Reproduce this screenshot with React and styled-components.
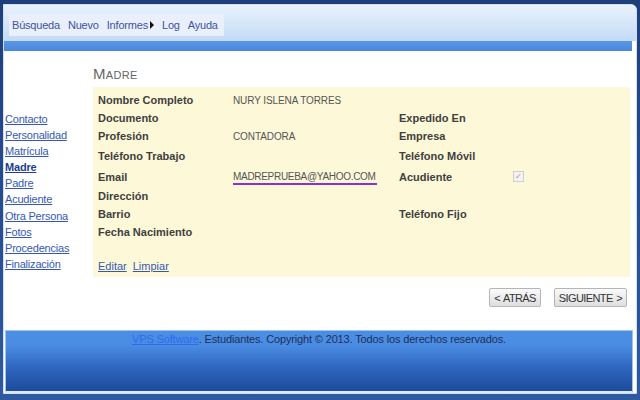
import React from "react";
import styled, { createGlobalStyle } from "styled-components";

const GlobalStyle = createGlobalStyle`
  html, body {
    margin: 0;
    padding: 0;
    background: #2b4b8a;
  }
  body {
    font-family: "Liberation Sans", Arial, sans-serif;
  }
`;

const Frame = styled.div`
  width: 640px;
  height: 400px;
  box-sizing: border-box;
  padding: 4px 3px 6px 3px;
  background: linear-gradient(#1f3f7c, #2f5aa0);
`;

const Page = styled.div`
  height: 100%;
  display: flex;
  flex-direction: column;
  background: #ffffff;
  border-radius: 0 6px 0 0;
  overflow: hidden;
  border: 1px solid #cfe0f5;
  box-sizing: border-box;
`;

const Header = styled.div`
  height: 36px;
  box-sizing: border-box;
  padding: 9px 0 0 5px;
  background: linear-gradient(#e9f2fd, #c3dbf6);
`;

const Menu = styled.nav`
  display: inline-flex;
  align-items: center;
  gap: 8px;
  height: 22px;
  padding: 0 6px 0 3px;
  background: #e9f0fb;
  font-size: 11px;
  letter-spacing: -0.2px;
  color: #3d52a4;
`;

const MenuItem = styled.span`
  display: inline-flex;
  align-items: center;
  gap: 2px;
`;

const Arrow = styled.span`
  width: 0;
  height: 0;
  border-top: 4px solid transparent;
  border-bottom: 4px solid transparent;
  border-left: 4px solid #111;
`;

const BlueBar = styled.div`
  height: 10px;
  margin-right: 4px;
  background: linear-gradient(#5b97e6, #4a86d8);
`;

const Body = styled.div`
  flex: 1;
  display: flex;
`;

const Sidebar = styled.div`
  width: 89px;
  padding: 60px 0 0 1px;
  display: flex;
  flex-direction: column;
  align-items: flex-start;
  box-sizing: border-box;
`;

const NavLink = styled.a`
  font-size: 11px;
  letter-spacing: -0.2px;
  line-height: 16.1px;
  color: ${(p) => (p.$active ? "#1d3c95" : "#3558b5")};
  font-weight: ${(p) => (p.$active ? "bold" : "normal")};
  text-decoration: underline;
`;

const Main = styled.div`
  flex: 1;
  padding: 14px 6px 0 0;
  display: flex;
  flex-direction: column;
`;

const Title = styled.h2`
  margin: 0 0 4px 0;
  height: 18px;
  font-size: 15px;
  font-weight: normal;
  font-variant: small-caps;
  color: #666666;
  letter-spacing: 0.3px;
`;

const Panel = styled.div`
  background: #fdf8d8;
  height: 190px;
  box-sizing: border-box;
  padding: 4px 0 0 5px;
  display: flex;
  flex-direction: column;
`;

const Row = styled.div`
  display: grid;
  grid-template-columns: 135px 166px 114px 1fr;
  align-items: center;
  height: ${(p) => p.$h || 18}px;
  font-size: 11px;
`;

const Label = styled.span`
  font-weight: bold;
  color: #3f3f3f;
`;

const Value = styled.span`
  color: #555555;
  font-size: 10px;
  letter-spacing: -0.1px;
`;

const EmailValue = styled(Value)`
  justify-self: start;
  border-bottom: 2px solid #8e2fd0;
  padding: 0 1px 1px 0;
  margin-top: 3px;
  letter-spacing: -0.3px;
`;

const Check = styled.span`
  width: 9px;
  height: 9px;
  border: 1px solid #cfcfcf;
  background: #f3f3f3;
  font-size: 8px;
  line-height: 9px;
  color: #9a9a9a;
  text-align: center;
`;

const Actions = styled.div`
  margin-top: 19px;
  display: flex;
  gap: 6px;
  font-size: 11px;
`;

const ActionLink = styled.a`
  color: #3558b5;
  text-decoration: underline;
`;

const ButtonRow = styled.div`
  display: flex;
  justify-content: flex-end;
  gap: 13px;
  margin-top: 11px;
  padding-right: 3px;
`;

const Button = styled.button`
  height: 19px;
  padding: 0 4px;
  font-family: "Liberation Sans", Arial, sans-serif;
  font-size: 11px;
  letter-spacing: -0.6px;
  word-spacing: 1px;
  color: #333;
  border: 1px solid #b5b5b5;
  border-radius: 2px;
  background: linear-gradient(#fafafa, #dedede);
`;

const Footer = styled.div`
  height: 63px;
  margin: 0 3px 0 1px;
  border: 1px solid #9fc3f0;
  border-bottom: 2px solid #dfeaf8;
  background: linear-gradient(#4a8fe4 0%, #4a8ce2 25%, #2f67c0 60%, #1d4b9b 100%);
  text-align: center;
  font-size: 11px;
  letter-spacing: -0.15px;
  color: #1f2f5c;
  padding-top: 2px;
  box-sizing: border-box;
`;

const FooterLink = styled.a`
  color: #2b6cf0;
  text-decoration: underline;
`;

const navItems = [
  "Contacto",
  "Personalidad",
  "Matrícula",
  "Madre",
  "Padre",
  "Acudiente",
  "Otra Persona",
  "Fotos",
  "Procedencias",
  "Finalización",
];

export default function App() {
  return (
    <>
      <GlobalStyle />
      <Frame>
        <Page>
          <Header>
            <Menu>
              <MenuItem>Búsqueda</MenuItem>
              <MenuItem>Nuevo</MenuItem>
              <MenuItem>
                Informes <Arrow />
              </MenuItem>
              <MenuItem>Log</MenuItem>
              <MenuItem>Ayuda</MenuItem>
            </Menu>
          </Header>
          <BlueBar />
          <Body>
            <Sidebar>
              {navItems.map((n) => (
                <NavLink key={n} $active={n === "Madre"}>
                  {n}
                </NavLink>
              ))}
            </Sidebar>
            <Main>
              <Title>Madre</Title>
              <Panel>
                <Row>
                  <Label>Nombre Completo</Label>
                  <Value>NURY ISLENA TORRES</Value>
                </Row>
                <Row>
                  <Label>Documento</Label>
                  <span />
                  <Label>Expedido En</Label>
                </Row>
                <Row>
                  <Label>Profesión</Label>
                  <Value>CONTADORA</Value>
                  <Label>Empresa</Label>
                </Row>
                <Row $h={22}>
                  <Label>Teléfono Trabajo</Label>
                  <span />
                  <Label>Teléfono Móvil</Label>
                </Row>
                <Row $h={19}>
                  <Label>Email</Label>
                  <EmailValue>MADREPRUEBA@YAHOO.COM</EmailValue>
                  <Label>Acudiente</Label>
                  <Check>✓</Check>
                </Row>
                <Row $h={19}>
                  <Label>Dirección</Label>
                </Row>
                <Row>
                  <Label>Barrio</Label>
                  <span />
                  <Label>Teléfono Fijo</Label>
                </Row>
                <Row>
                  <Label>Fecha Nacimiento</Label>
                </Row>
                <Actions>
                  <ActionLink>Editar</ActionLink>
                  <ActionLink>Limpiar</ActionLink>
                </Actions>
              </Panel>
              <ButtonRow>
                <Button>&lt; ATRÁS</Button>
                <Button>SIGUIENTE &gt;</Button>
              </ButtonRow>
            </Main>
          </Body>
          <Footer>
            <FooterLink>VPS Software</FooterLink>. Estudiantes. Copyright © 2013.
            Todos los derechos reservados.
          </Footer>
        </Page>
      </Frame>
    </>
  );
}
